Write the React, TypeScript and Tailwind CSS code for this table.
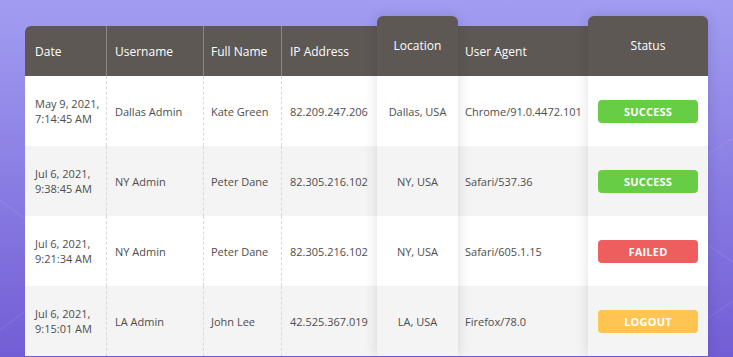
import React from 'react';

type Row = {
  date: [string, string];
  username: string;
  fullName: string;
  ip: string;
  location: string;
  agent: string;
  status: 'SUCCESS' | 'FAILED' | 'LOGOUT';
};

const rows: Row[] = [
  { date: ['May 9, 2021,', '7:14:45 AM'], username: 'Dallas Admin', fullName: 'Kate Green', ip: '82.209.247.206', location: 'Dallas, USA', agent: 'Chrome/91.0.4472.101', status: 'SUCCESS' },
  { date: ['Jul 6, 2021,', '9:38:45 AM'], username: 'NY Admin', fullName: 'Peter Dane', ip: '82.305.216.102', location: 'NY, USA', agent: 'Safari/537.36', status: 'SUCCESS' },
  { date: ['Jul 6, 2021,', '9:21:34 AM'], username: 'NY Admin', fullName: 'Peter Dane', ip: '82.305.216.102', location: 'NY, USA', agent: 'Safari/605.1.15', status: 'FAILED' },
  { date: ['Jul 6, 2021,', '9:15:01 AM'], username: 'LA Admin', fullName: 'John Lee', ip: '42.525.367.019', location: 'LA, USA', agent: 'Firefox/78.0', status: 'LOGOUT' },
];

const rowBg = (i: number) => (i % 2 === 0 ? 'bg-white' : 'bg-[#f4f4f4]');

const badgeClass = {
  SUCCESS: 'bg-[#66cd45]',
  FAILED: 'bg-[#ee5e5e]',
  LOGOUT: 'bg-[#ffc550]',
};

function Column({
  title,
  width,
  raised,
  divider,
  center,
  pad,
  rounded,
  shadow,
  render,
}: {
  title: string;
  width: string;
  raised?: boolean;
  divider?: boolean;
  center?: boolean;
  pad: string;
  rounded?: string;
  shadow?: boolean;
  render: (r: Row) => React.ReactNode;
}) {
  return (
    <div className={`flex flex-col ${width} ${raised ? '' : 'pt-[10px]'} ${shadow ? 'relative z-10 shadow-[0_0_14px_rgba(0,0,0,0.13)]' : ''} ${rounded ?? ''}`}>
      <div
        className={`flex items-center bg-[#5d5854] text-[12px] font-medium text-white ${raised ? 'h-[60px]' : 'h-[50px] pt-[1px]'} ${
          center ? 'justify-center' : pad
        } ${divider ? 'border-r border-[#8c8682]' : ''} ${rounded ?? ''}`}
      >
        {title}
      </div>
      {rows.map((r, i) => (
        <div
          key={i}
          className={`flex h-[70px] items-center text-[11px] leading-[15px] text-[#4d4d4d] ${rowBg(i)} ${
            center ? 'justify-center' : pad
          } ${divider ? 'border-r border-dashed border-[#d8d8d8]' : ''}`}
        >
          {render(r)}
        </div>
      ))}
    </div>
  );
}

export default function App() {
  return (
    <div
      className="relative h-[357px] w-[733px] overflow-hidden bg-gradient-to-b from-[#a29df1] to-[#735dd5]"
      style={{ fontFamily: '"Open Sans", "Liberation Sans", sans-serif' }}
    >
      <svg className="absolute inset-0" width="733" height="357" fill="none" stroke="white" strokeOpacity="0.07" strokeWidth="1.5">
        <path d="M-40 230 L0 200 L40 230 L40 300 L0 330 L-40 300 Z" />
        <path d="M700 160 L745 130 L790 160 L790 240 L745 270 L700 240 Z" />
        <path d="M690 330 L735 300 L780 330 L780 410 L735 440 L690 410 Z" />
      </svg>
      <div className="relative flex pl-[25px] pt-[16px]">
        <Column title="Date" width="w-[82px]" divider pad="pl-[10px]" rounded="rounded-tl-[6px]" render={(r) => (
          <div>
            <div>{r.date[0]}</div>
            <div>{r.date[1]}</div>
          </div>
        )} />
        <Column title="Username" width="w-[97px]" divider pad="pl-[8px]" render={(r) => r.username} />
        <Column title="Full Name" width="w-[78px]" divider pad="pl-[7px]" render={(r) => r.fullName} />
        <Column title="IP Address" width="w-[95px]" pad="pl-[8px]" render={(r) => r.ip} />
        <Column title="Location" width="w-[81px]" raised center shadow pad="" rounded="rounded-t-[6px]" render={(r) => r.location} />
        <Column title="User Agent" width="w-[130px]" pad="pl-[7px]" render={(r) => r.agent} />
        <Column title="Status" width="w-[120px]" raised center shadow pad="" rounded="rounded-t-[6px]" render={(r) => (
          <div className={`flex h-[23px] w-[100px] items-center justify-center rounded-[4px] text-[11px] font-bold tracking-[0.2px] text-white ${badgeClass[r.status]}`}>
            {r.status}
          </div>
        )} />
      </div>
    </div>
  );
}
